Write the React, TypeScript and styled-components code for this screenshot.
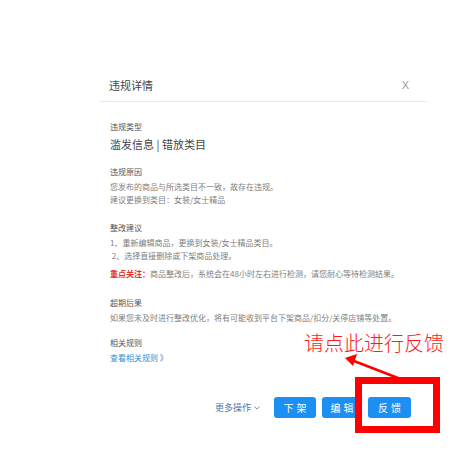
import React from "react";
import styled, { createGlobalStyle } from "styled-components";

const GlobalStyle = createGlobalStyle`
  html, body {
    margin: 0;
    padding: 0;
    background: #fff;
  }
  body {
    font-family: "Noto Sans CJK SC", "Noto Sans", sans-serif;
  }
`;

const Page = styled.div`
  position: relative;
  width: 476px;
  height: 456px;
  overflow: hidden;
  background: #fff;
  padding-top: 68px;
  box-sizing: border-box;
`;

const Modal = styled.div`
  margin-left: 100px;
  width: 327px;
`;

const Header = styled.div`
  height: 33px;
  display: flex;
  align-items: center;
  justify-content: space-between;
  padding: 0 18px 0 9px;
  border-bottom: 1px solid #e6ebf0;
`;

const Title = styled.div`
  font-size: 11px;
  color: #444;
`;

const Close = styled.span`
  font-family: "Liberation Sans", sans-serif;
  font-size: 11px;
  color: #9a9a9a;
`;

const Body = styled.div`
  padding: 19px 10px 0 10px;
`;

const Section = styled.div<{ $gap?: number }>`
  margin-top: ${(p) => p.$gap ?? 0}px;
`;

const Label = styled.div`
  font-size: 8px;
  line-height: 12px;
  color: #555;
  margin-bottom: 3px;
`;

const Value = styled.div`
  font-size: 11px;
  line-height: 16px;
  color: #444;
`;

const Text = styled.div<{ $top?: number }>`
  font-size: 8px;
  line-height: 12.5px;
  color: #808080;
  margin-top: ${(p) => p.$top ?? 0}px;
  white-space: pre;
`;

const Em = styled.span`
  color: #e3312d;
  font-weight: bold;
`;

const RuleLink = styled.a`
  display: block;
  font-size: 8px;
  line-height: 12px;
  color: #3d8bd0;
  text-decoration: none;
`;

const Footer = styled.div`
  display: flex;
  align-items: center;
  justify-content: flex-end;
  gap: 6px;
  margin-top: 33px;
  padding-right: 16px;
`;

const MoreOps = styled.span`
  font-size: 9px;
  color: #4d7aa6;
  margin-right: 8px;
  display: flex;
  align-items: center;
  gap: 3px;
`;

const Btn = styled.button<{ $w: number }>`
  width: ${(p) => p.$w}px;
  height: 21px;
  border: none;
  border-radius: 3px;
  background: #1b90f2;
  color: #fff;
  font-family: "Noto Sans CJK SC", sans-serif;
  font-size: 10px;
  letter-spacing: 3px;
  padding: 0 0 0 3px;
  cursor: pointer;
`;

const Note = styled.div`
  position: absolute;
  left: 304px;
  top: 330px;
  font-size: 20px;
  line-height: 26px;
  color: #ff1a1a;
  font-weight: 300;
`;

const Highlight = styled.div`
  position: absolute;
  left: 355px;
  top: 377px;
  width: 85px;
  height: 56px;
  border: 7px solid #f00;
  box-sizing: border-box;
`;

const Arrow = styled.svg`
  position: absolute;
  left: 340px;
  top: 350px;
`;

export default function App() {
  return (
    <>
      <GlobalStyle />
      <Page>
        <Modal>
          <Header>
            <Title>违规详情</Title>
            <Close>X</Close>
          </Header>
          <Body>
            <Section>
              <Label>违规类型</Label>
              <Value>滥发信息 | 错放类目</Value>
            </Section>
            <Section $gap={14}>
              <Label>违规原因</Label>
              <Text>您发布的商品与所选类目不一致，故存在违规。</Text>
              <Text>建议更换到类目：女装/女士精品</Text>
            </Section>
            <Section $gap={16}>
              <Label>整改建议</Label>
              <Text>1、重新编辑商品，更换到女装/女士精品类目。</Text>
              <Text> 2、选择直接删除或下架商品处理。</Text>
              <Text $top={6}>
                <Em>重点关注：</Em>商品整改后，系统会在48小时左右进行检测，请您耐心等待检测结果。
              </Text>
            </Section>
            <Section $gap={16}>
              <Label>超期后果</Label>
              <Text>如果您未及时进行整改优化，将有可能收到平台下架商品/扣分/关停店铺等处置。</Text>
            </Section>
            <Section $gap={13}>
              <Label>相关规则</Label>
              <RuleLink href="#">查看相关规则 》</RuleLink>
            </Section>
          </Body>
          <Footer>
            <MoreOps>
              更多操作
              <svg width="6" height="4" viewBox="0 0 6 4">
                <path d="M0.5 0.5 L3 3.2 L5.5 0.5" fill="none" stroke="#4d7aa6" strokeWidth="0.8" />
              </svg>
            </MoreOps>
            <Btn $w={42}>下架</Btn>
            <Btn $w={40}>编辑</Btn>
            <Btn $w={43}>反馈</Btn>
          </Footer>
        </Modal>
        <Note>请点此进行反馈</Note>
        <Arrow width="64" height="32" viewBox="0 0 64 32">
          <line x1="58" y1="28" x2="14" y2="11" stroke="#f00" strokeWidth="2.5" />
          <polygon points="5,8 17,4 13,16" fill="#f00" />
        </Arrow>
        <Highlight />
      </Page>
    </>
  );
}
